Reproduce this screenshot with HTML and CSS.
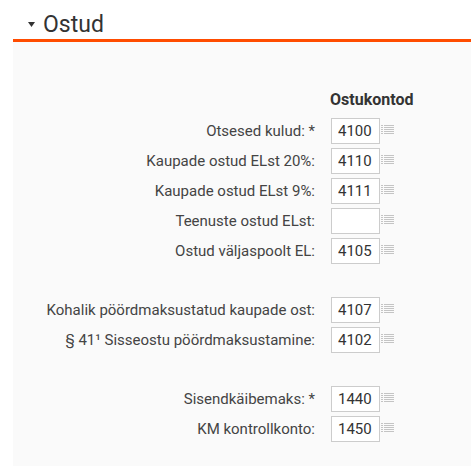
FILE: index.html
```html
<!DOCTYPE html>
<html lang="et">
<head>
<meta charset="utf-8">
<link rel="stylesheet" href="styles.css">
</head>
<body>
<section class="section">
  <div class="head">
    <svg class="caret" width="7" height="5" viewBox="0 0 7 5"><polygon points="0,0 7,0 3.5,5" fill="#333"/></svg>
    <h2 class="title">Ostud</h2>
  </div>
  <div class="panel">
    <div class="grid">
      <div class="colhead">Ostukontod</div>

      <label class="lbl">Otsesed kulud: *</label>
      <input class="acc" value="4100"><span class="ico"></span>

      <label class="lbl">Kaupade ostud ELst 20%:</label>
      <input class="acc" value="4110"><span class="ico"></span>

      <label class="lbl">Kaupade ostud ELst 9%:</label>
      <input class="acc" value="4111"><span class="ico"></span>

      <label class="lbl">Teenuste ostud ELst:</label>
      <input class="acc" value=""><span class="ico"></span>

      <label class="lbl">Ostud väljaspoolt EL:</label>
      <input class="acc" value="4105"><span class="ico"></span>

      <div class="spacer"></div>

      <label class="lbl">Kohalik pöördmaksustatud kaupade ost:</label>
      <input class="acc" value="4107"><span class="ico"></span>

      <label class="lbl">§ 41¹ Sisseostu pöördmaksustamine:</label>
      <input class="acc" value="4102"><span class="ico"></span>

      <div class="spacer"></div>

      <label class="lbl">Sisendkäibemaks: *</label>
      <input class="acc" value="1440"><span class="ico"></span>

      <label class="lbl">KM kontrollkonto:</label>
      <input class="acc" value="1450"><span class="ico"></span>
    </div>
  </div>
</section>
<svg width="0" height="0" style="position:absolute">
  <defs>
    <symbol id="list" viewBox="0 0 13 10">
      <g fill="#c4c4c4">
        <rect x="0" y="0" width="2" height="1"/><rect x="3" y="0" width="10" height="1"/>
        <rect x="0" y="2" width="2" height="1"/><rect x="3" y="2" width="10" height="1"/>
        <rect x="0" y="4" width="2" height="1"/><rect x="3" y="4" width="10" height="1"/>
        <rect x="0" y="6" width="2" height="1"/><rect x="3" y="6" width="10" height="1"/>
        <rect x="0" y="8" width="2" height="1"/><rect x="3" y="8" width="10" height="1"/>
      </g>
    </symbol>
  </defs>
</svg>
<script>
document.querySelectorAll('.ico').forEach(function(s){
  s.innerHTML='<svg width="13" height="10"><use href="#list"/></svg>';
});
</script>
</body>
</html>
```
FILE: styles.css
```css
html, body {
  margin: 0;
  padding: 0;
  background: #fff;
}
body {
  font-family: Roboto, "Liberation Sans", sans-serif;
  color: #444;
}
.section {
  margin-left: 13px;
}
.head {
  display: flex;
  align-items: center;
  height: 42px;
  box-sizing: border-box;
  padding: 12px 0 3px 15px;
  border-bottom: 3px solid #ff4c00;
}
.caret {
  display: block;
  margin-right: 8px;
  margin-top: 1px;
}
.title {
  margin: 0;
  font-size: 23px;
  font-weight: 400;
  line-height: 27px;
  color: #333;
}
.panel {
  background: #fafafa;
  padding: 48px 0 24px 0;
  min-height: 380px;
  box-sizing: border-box;
}
.grid {
  display: grid;
  grid-template-columns: 302px 65px 14px;
  row-gap: 4px;
  align-items: center;
}
.colhead {
  grid-column: 2 / span 2;
  font-size: 16px;
  font-weight: 700;
  line-height: 19px;
  color: #333;
  margin: 0 0 5px 15px;
  white-space: nowrap;
}
.lbl {
  grid-column: 1;
  text-align: right;
  font-size: 15px;
  line-height: 18px;
  color: #444;
  white-space: nowrap;
}
.acc {
  grid-column: 2;
  width: 49px;
  height: 26px;
  box-sizing: border-box;
  border: 1px solid #ccc;
  background: #fff;
  padding: 0 0 0 6px;
  margin: 0 0 0 16px;
  font-family: Roboto, "Liberation Sans", sans-serif;
  font-size: 15px;
  color: #333;
  outline: none;
}
.ico {
  grid-column: 3;
  display: block;
  width: 13px;
  height: 10px;
  margin-left: 1px;
  margin-top: -2px;
}
.ico svg {
  display: block;
}
.spacer {
  grid-column: 1 / span 3;
  height: 25px;
}
```
